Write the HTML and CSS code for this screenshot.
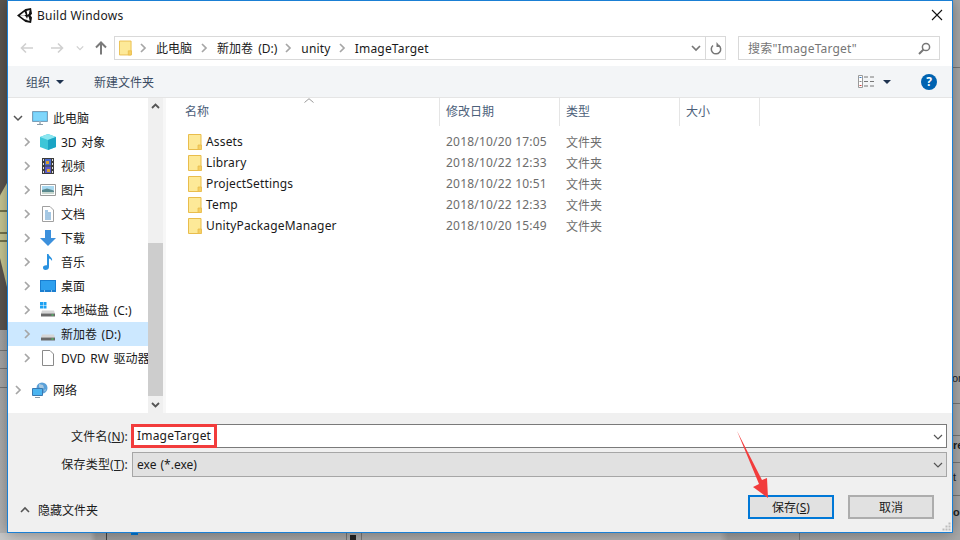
FILE: index.html
```html
<!DOCTYPE html>
<html lang="zh-CN">
<head>
  <meta charset="UTF-8">
  <title>Build Windows</title>
  <link rel="stylesheet" href="styles.css">
</head>
<body>
  <svg class="sprites" aria-hidden="true">
    <symbol id="folder" viewBox="0 0 14 16">
      <path d="M.5.5h12.5v15H.5z" fill="#fde998" stroke="#e9bd4c"/>
      <path d="M10 11h3.500v4.500H10z" fill="#f6cf62" stroke="#e9bd4c" stroke-width=".8"/>
    </symbol>
    <symbol id="chev-right" viewBox="0 0 10 10">
      <path d="M3 1l4 4-4 4" fill="none" stroke="#a6a6a6" stroke-width="1.700"/>
    </symbol>
    <symbol id="chev-down" viewBox="0 0 10 10">
      <path d="M1 3l4 4 4-4" fill="none" stroke="#555" stroke-width="1.500"/>
    </symbol>
    <symbol id="drive" viewBox="0 0 16 16">
      <path d="M2 8.500h12l1 3H1z" fill="#d6d6d6"/>
      <path d="M1 11h14v3.500H1z" fill="#6a6a6a"/>
      <path d="M1 11h14v1H1z" fill="#a8a8a8"/>
      <path d="M11.500 12.500h2v1h-2z" fill="#44e060"/>
    </symbol>
  </svg>

  <div class="desktop">
    <div class="strip-left"></div>
    <div class="strip-leaf"></div>
    <div class="strip-right"></div>
    <div class="strip-bottom"></div>
    <div class="peek peek-or">or</div>
    <div class="peek peek-re">re</div>
    <div class="peek peek-t">t</div>
    <div class="peek peek-ou">ou</div>

    <div class="dialog">
      <div class="titlebar">
        <svg class="logo" width="15" height="15" viewBox="0 0 16 16">
          <path d="M0 8L9 1l6-1 1 6-1.600 2L16 10l-1 6-6-1z" fill="#111"/>
          <path d="M3 8l5-4 1.500 3.300L8 8zM10.200 3.200l3.300-1-.8 4-1.500 1.300zM3 8.200h5l1.500.8 1.700 3.500-.2.300-3-.8zM11.700 8.600l1 1.400.8 3.800-3.300-1z" fill="#fff"/>
        </svg>
        <span class="title">Build Windows</span>
        <svg class="close" width="12" height="12" viewBox="0 0 12 12">
          <path d="M1 1l10 10M11 1L1 11" stroke="#111" stroke-width="1.100"/>
        </svg>
      </div>

      <div class="addressrow">
        <div class="navbtns">
          <svg width="14" height="12" viewBox="0 0 14 12"><path d="M13 6H2M6 1.500L1.500 6 6 10.500" fill="none" stroke="#d0d0d0" stroke-width="1.600"/></svg>
          <svg class="nav-fwd" width="14" height="12" viewBox="0 0 14 12"><path d="M1 6h11M8 1.500L12.500 6 8 10.500" fill="none" stroke="#d0d0d0" stroke-width="1.600"/></svg>
          <svg class="nav-drop" width="8" height="8" viewBox="0 0 10 10"><path d="M1 3l4 4 4-4" fill="none" stroke="#d0d0d0" stroke-width="1.600"/></svg>
          <svg class="nav-up" width="12" height="14" viewBox="0 0 12 14"><path d="M6 13.500V2M1 6.500L6 1.500l5 5" fill="none" stroke="#7a7a7a" stroke-width="2"/></svg>
        </div>
        <div class="pathbox">
          <svg class="pathfolder" width="13" height="16"><use href="#folder"/></svg>
          <svg class="sep" width="10" height="10"><use href="#chev-right"/></svg>
          <span class="crumb crumb-first">此电脑</span>
          <svg class="sep" width="10" height="10"><use href="#chev-right"/></svg>
          <span class="crumb crumb-drive">新加卷 (D:)</span>
          <svg class="sep" width="10" height="10"><use href="#chev-right"/></svg>
          <span class="crumb latin">unity</span>
          <svg class="sep" width="10" height="10"><use href="#chev-right"/></svg>
          <span class="crumb latin">ImageTarget</span>
          <svg class="pathdrop" width="10" height="10" viewBox="0 0 10 10"><path d="M1 3l4 4 4-4" fill="none" stroke="#777" stroke-width="1.700"/></svg>
          <div class="refresh">
            <svg width="12" height="13" viewBox="0 0 12 13"><path d="M8.700 3.300A4.700 4.700 0 1 1 3 3.500" fill="none" stroke="#777" stroke-width="1.500"/><path d="M6.500 0v5h4z" fill="#777"/></svg>
          </div>
        </div>
        <div class="searchbox">
          <span class="latin">搜索"ImageTarget"</span>
          <svg width="13" height="13" viewBox="0 0 13 13"><circle cx="8" cy="5" r="3.600" fill="none" stroke="#777" stroke-width="1.500"/><path d="M5.500 7.500L1 12" stroke="#777" stroke-width="2"/></svg>
        </div>
      </div>

      <div class="toolbar">
        <span class="tool">组织</span>
        <span class="caret"></span>
        <span class="tool tool-new">新建文件夹</span>
        <svg class="viewicon" width="17" height="13" viewBox="0 0 17 13">
          <path d="M.5.500h4v12h-4z" fill="#fff" stroke="#9a9a9a"/>
          <path d="M1.500 2h2v1h-2z" fill="#3d7cc4"/>
          <path d="M1.500 6h2v1h-2z" fill="#888"/>
          <path d="M1.500 10h2v1h-2z" fill="#d04040"/>
          <path d="M6 2h4M12 2h4M6 6.500h4M12 6.500h4M6 11h4M12 11h4" stroke="#777"/>
        </svg>
        <span class="caret caret-view"></span>
        <span class="help">?</span>
      </div>

      <div class="content">
        <div class="navpane">
          <div class="navrow navrow-top">
            <svg class="chev" width="10" height="10"><use href="#chev-down"/></svg>
            <svg width="16" height="16" viewBox="0 0 16 16"><path d="M.5 1.500h15v10H.5z" fill="#62c6f5" stroke="#7c9fb8"/><path d="M1.500 2.500h13v8h-13z" fill="#7fd6fb"/><path d="M5 14h6v1H5z" fill="#8a9aa6"/><path d="M7 11.500h2V14H7z" fill="#b4c0c8"/></svg>
            <span>此电脑</span>
          </div>
          <div class="navrow">
            <svg class="chev" width="10" height="10"><use href="#chev-right"/></svg>
            <svg width="16" height="16" viewBox="0 0 16 16"><path d="M8 0l8 3v10l-8 3-8-3V3z" fill="#3cc6d8"/><path d="M8 6L0 3l8-3 8 3z" fill="#8be6f0"/><path d="M8 6v10l8-3V3z" fill="#1aa4c4"/></svg>
            <span>3D 对象</span>
          </div>
          <div class="navrow">
            <svg class="chev" width="10" height="10"><use href="#chev-right"/></svg>
            <svg width="16" height="16" viewBox="0 0 16 16"><path d="M2 0h12v16H2z" fill="#3c3c3c"/><path d="M5 1h6v6.500H5z" fill="#4a6ad0"/><path d="M5 8.500h6V15H5z" fill="#5a5ac8"/><path d="M6 3h3v3H6zM7 11h3v3H7z" fill="#d8a030"/><path d="M3 1h1v2H3zM3 5h1v2H3zM3 9h1v2H3zM3 13h1v2H3zM12 1h1v2h-1zM12 5h1v2h-1zM12 9h1v2h-1zM12 13h1v2h-1z" fill="#ddd"/></svg>
            <span>视频</span>
          </div>
          <div class="navrow">
            <svg class="chev" width="10" height="10"><use href="#chev-right"/></svg>
            <svg width="16" height="14" viewBox="0 0 16 14"><path d="M.5 1.500h15v11H.5z" fill="#fff" stroke="#9a9a9a"/><path d="M2 3h12v4H2z" fill="#a8d8f0"/><path d="M2 7l5-1.500L14 7.500V11H2z" fill="#5a8a90"/><path d="M2 9h12v2H2z" fill="#c8d8d0"/></svg>
            <span>图片</span>
          </div>
          <div class="navrow">
            <svg class="chev" width="10" height="10"><use href="#chev-right"/></svg>
            <svg width="16" height="16" viewBox="0 0 16 16"><path d="M2.500.5H10l3.500 3.500v11.500h-11z" fill="#fff" stroke="#a0a0a0"/><path d="M5 5h3M5 7h6M5 9h6M5 11h6M5 13h6" stroke="#4a90c8"/></svg>
            <span>文档</span>
          </div>
          <div class="navrow">
            <svg class="chev" width="10" height="10"><use href="#chev-right"/></svg>
            <svg width="16" height="16" viewBox="0 0 16 16"><path d="M5 0h6v8h5l-8 8-8-8h5z" fill="#3c90dc"/></svg>
            <span>下载</span>
          </div>
          <div class="navrow">
            <svg class="chev" width="10" height="10"><use href="#chev-right"/></svg>
            <svg width="16" height="16" viewBox="0 0 16 16"><path d="M7 0h1.500c.5 3 4.500 3.500 3.500 7-.7-1.500-2-2.300-3-2.500V13c0 2-1.500 3-3.500 3S3 15 3 13.500 4.500 11 7 11.300z" fill="#2a92e0"/></svg>
            <span>音乐</span>
          </div>
          <div class="navrow">
            <svg class="chev" width="10" height="10"><use href="#chev-right"/></svg>
            <svg width="16" height="12" viewBox="0 0 16 12"><path d="M0 0h16v12H0z" fill="#1a7ed0"/><path d="M1 1h14v9H1z" fill="#2ea0ee"/><path d="M4 10.500h1v1H4zM11 10.500h1v1h-1z" fill="#fff"/></svg>
            <span>桌面</span>
          </div>
          <div class="navrow">
            <svg class="chev" width="10" height="10"><use href="#chev-right"/></svg>
            <svg width="16" height="16" viewBox="0 0 16 16"><use href="#drive"/><path d="M0 0h3v3H0zM3.500 0h3v3h-3zM0 3.500h3v3H0zM3.500 3.500h3v3h-3z" fill="#1da1f2"/></svg>
            <span>本地磁盘 (C:)</span>
          </div>
          <div class="navrow navrow-selected">
            <svg class="chev" width="10" height="10"><use href="#chev-right"/></svg>
            <svg width="16" height="16" viewBox="0 0 16 16"><use href="#drive"/></svg>
            <span>新加卷 (D:)</span>
          </div>
          <div class="navrow">
            <svg class="chev" width="10" height="10"><use href="#chev-right"/></svg>
            <svg width="16" height="16" viewBox="0 0 16 16"><path d="M2.500.5H10l3.500 3.500v11.500h-11z" fill="#fff" stroke="#8a8a8a"/></svg>
            <span>DVD RW 驱动器 (E:)</span>
          </div>
          <div class="navrow navrow-top navrow-net">
            <svg class="chev" width="10" height="10"><use href="#chev-right"/></svg>
            <svg width="16" height="16" viewBox="0 0 16 16"><circle cx="10" cy="6" r="5.500" fill="#5aa0d8"/><path d="M7 2l4 1 1 3-3 1-2-2zM12 8l2-1-1 3z" fill="#a8c8e0"/><path d="M.5 6.500h10v7H.5z" fill="#4ab4f0" stroke="#3a78b0"/><path d="M3 15h5v1H3z" fill="#8a9aa6"/></svg>
            <span>网络</span>
          </div>
        </div>

        <div class="scrollbar">
          <svg class="scrollbtn" width="15" height="17" viewBox="0 0 15 17"><path d="M4 10l3.500-3.500L11 10" fill="none" stroke="#555" stroke-width="1.800"/></svg>
          <div class="scrolltrack"><div class="scrollthumb"></div></div>
          <svg class="scrollbtn" width="15" height="17" viewBox="0 0 15 17"><path d="M4 7l3.500 3.500L11 7" fill="none" stroke="#555" stroke-width="1.800"/></svg>
        </div>

        <div class="filelist">
          <svg class="sortmark" width="10" height="5" viewBox="0 0 10 5"><path d="M.5 4.500L5 .7l4.500 3.800" fill="none" stroke="#999"/></svg>
          <div class="row row-head">
            <div class="cell cell-name">名称</div>
            <div class="cell">修改日期</div>
            <div class="cell">类型</div>
            <div class="cell">大小</div>
          </div>
          <div class="rows">
            <div class="row">
              <div class="fname"><svg width="14" height="16"><use href="#folder"/></svg>Assets</div>
              <div class="fmeta latin">2018/10/20 17:05</div>
              <div class="fmeta">文件夹</div>
            </div>
            <div class="row">
              <div class="fname"><svg width="14" height="16"><use href="#folder"/></svg>Library</div>
              <div class="fmeta latin">2018/10/22 12:33</div>
              <div class="fmeta">文件夹</div>
            </div>
            <div class="row">
              <div class="fname"><svg width="14" height="16"><use href="#folder"/></svg>ProjectSettings</div>
              <div class="fmeta latin">2018/10/22 10:51</div>
              <div class="fmeta">文件夹</div>
            </div>
            <div class="row">
              <div class="fname"><svg width="14" height="16"><use href="#folder"/></svg>Temp</div>
              <div class="fmeta latin">2018/10/22 12:33</div>
              <div class="fmeta">文件夹</div>
            </div>
            <div class="row">
              <div class="fname"><svg width="14" height="16"><use href="#folder"/></svg>UnityPackageManager</div>
              <div class="fmeta latin">2018/10/20 15:49</div>
              <div class="fmeta">文件夹</div>
            </div>
          </div>
        </div>
      </div>

      <div class="bottom">
        <div class="fields">
          <label class="fieldlabel">文件名(<u>N</u>):</label>
          <div class="field field-input">
            <span class="redbox latin">ImageTarget</span>
            <svg class="fielddrop" width="10" height="10" viewBox="0 0 10 10"><path d="M1 3l4 4 4-4" fill="none" stroke="#555" stroke-width="1.200"/></svg>
          </div>
          <label class="fieldlabel">保存类型(<u>T</u>):</label>
          <div class="field field-select">
            <span>exe (*.exe)</span>
            <svg class="fielddrop" width="10" height="10" viewBox="0 0 10 10"><path d="M1 3l4 4 4-4" fill="none" stroke="#555" stroke-width="1.200"/></svg>
          </div>
        </div>
        <div class="actions">
          <div class="hidefolders">
            <svg width="10" height="10" viewBox="0 0 10 10"><path d="M1 7l4-4 4 4" fill="none" stroke="#555" stroke-width="1.600"/></svg>
            <span>隐藏文件夹</span>
          </div>
          <button class="btn btn-primary">保存(<u>S</u>)</button>
          <button class="btn">取消</button>
        </div>
        <svg class="grip" width="9" height="9" viewBox="0 0 9 9"><path d="M6.500.5h2v2h-2zM3.500 3.500h2v2h-2zM6.500 3.500h2v2h-2zM.5 6.500h2v2h-2zM3.500 6.500h2v2h-2zM6.500 6.500h2v2h-2z" fill="#bdbdbd"/></svg>
      </div>

      <svg class="arrow" width="34" height="72" viewBox="0 0 34 72">
        <path d="M2 2L27 51l5-2 1 20-15-11 6-3z" fill="#f23c3c"/>
      </svg>
    </div>
  </div>
</body>
</html>
```

FILE: styles.css
```css
* {
  box-sizing: border-box;
}
html, body {
  margin: 0;
  padding: 0;
  height: 100%;
}
body {
  font-family: "Noto Sans", "Noto Sans CJK SC", sans-serif;
  font-size: 12px;
  color: #1a1a1a;
  overflow: hidden;
}
.sprites {
  width: 0;
  height: 0;
  display: block;
}
u {
  text-underline-offset: 1px;
}
.latin {
  letter-spacing: 0.2px;
}

/* what shows behind the dialog */
.desktop {
  position: relative;
  width: 960px;
  height: 540px;
  overflow: hidden;
  padding-left: 7px;
  background: #a9a9a9;
}
.strip-left {
  position: absolute;
  left: 0;
  top: 0;
  width: 7px;
  height: 540px;
  background:
    linear-gradient(#777, #777) 0 350px / 7px 1px no-repeat,
    linear-gradient(#777, #777) 0 368px / 7px 1px no-repeat,
    linear-gradient(#777, #777) 0 387px / 7px 1px no-repeat,
    linear-gradient(#5c5650, #5c5650) 0 0 / 7px 330px no-repeat,
    linear-gradient(#8c8c8c, #b4b4b4);
}
.strip-leaf {
  position: absolute;
  left: 0;
  top: 183px;
  width: 7px;
  height: 104px;
  background:
    linear-gradient(#77764f, #77764f) 0 27px / 7px 2px no-repeat,
    linear-gradient(#77764f, #77764f) 0 49px / 7px 2px no-repeat,
    linear-gradient(#77764f, #77764f) 0 57px / 7px 2px no-repeat,
    #c9c995;
  clip-path: polygon(100% 0, 100% 100%, 0 72%, 0 12%);
}
.strip-right {
  position: absolute;
  left: 953px;
  top: 0;
  width: 7px;
  height: 540px;
  background:
    linear-gradient(#777, #777) 0 67px / 7px 1px no-repeat,
    linear-gradient(#777, #777) 0 403px / 7px 1px no-repeat,
    linear-gradient(#777, #777) 0 435px / 7px 1px no-repeat,
    linear-gradient(#777, #777) 0 462px / 7px 1px no-repeat,
    linear-gradient(#777, #777) 0 495px / 7px 1px no-repeat;
}
.strip-bottom {
  position: absolute;
  left: 0;
  top: 533px;
  width: 960px;
  height: 7px;
  background:
    linear-gradient(#0078d7, #0078d7) 131px 0 / 7px 2px no-repeat,
    linear-gradient(#222, #222) 350px 2px / 6px 5px no-repeat,
    linear-gradient(#444, #444) 106px 0 / 1px 7px no-repeat,
    linear-gradient(#777, #777) 346px 0 / 1px 7px no-repeat,
    linear-gradient(#777, #777) 361px 0 / 1px 7px no-repeat,
    linear-gradient(#777, #777) 799px 0 / 1px 7px no-repeat,
    linear-gradient(90deg, #c8c8c8 0, #b8b8b8 90px, #9c9c9c 96px, #b4b4b4 720px, #9c9c9c 728px, #a8a8a8);
}
.peek {
  position: absolute;
  left: 953px;
  z-index: 1;
  font-family: "Liberation Sans", sans-serif;
  font-size: 11px;
  line-height: 12px;
  color: #222;
}
.peek-or { top: 372px; left: 952px; }
.peek-re { top: 439px; font-weight: bold; }
.peek-t { top: 471px; }
.peek-ou { top: 506px; font-weight: bold; }

.dialog {
  position: relative;
  width: 946px;
  height: 533px;
  background: #fff;
  border: 1px solid #1a7fd4;
  box-shadow: 0 0 14px rgba(0, 0, 0, 0.35);
  display: flex;
  flex-direction: column;
  z-index: 2;
}

.titlebar {
  height: 30px;
  display: flex;
  align-items: center;
  padding: 0 9px 2px;
}
.logo {
  margin-right: 5px;
}
.title {
  flex: 1;
  letter-spacing: 0.25px;
}

.addressrow {
  height: 35px;
  display: flex;
  align-items: flex-start;
  padding-top: 5px;
}
.navbtns {
  width: 106px;
  height: 24px;
  padding-left: 12px;
  display: flex;
  align-items: center;
}
.nav-fwd { margin-left: 16px; }
.nav-drop { margin-left: 12px; }
.nav-up { margin-left: 11px; }
.pathbox {
  width: 612px;
  height: 24px;
  border: 1px solid #d9d9d9;
  display: flex;
  align-items: center;
  padding-left: 4px;
}
.pathfolder {
  margin-right: 6px;
}
.sep {
  margin-right: 8px;
}
.crumb {
  margin-right: 6px;
}
.crumb-first {
  margin-right: 7px;
}
.crumb-drive {
  word-spacing: 2px;
}
.pathdrop {
  margin-left: auto;
  margin-right: 4px;
}
.refresh {
  width: 20px;
  height: 22px;
  border-left: 1px solid #d9d9d9;
  display: flex;
  align-items: center;
  justify-content: center;
}
.searchbox {
  width: 202px;
  height: 24px;
  margin-left: 12px;
  border: 1px solid #d9d9d9;
  display: flex;
  align-items: center;
  justify-content: space-between;
  padding: 0 8px 0 9px;
  color: #767676;
}

.toolbar {
  height: 32px;
  background: #f3f5f7;
  border-bottom: 1px solid #e5e5e5;
  display: flex;
  align-items: center;
  padding-left: 18px;
  color: #3b4c63;
}
.caret {
  width: 0;
  height: 0;
  margin-left: 6px;
  border-left: 4px solid transparent;
  border-right: 4px solid transparent;
  border-top: 4px solid #1f3350;
}
.tool-new {
  margin-left: 30px;
}
.viewicon {
  margin-left: auto;
}
.caret-view {
  margin-left: 8px;
}
.help {
  width: 16px;
  height: 16px;
  margin: 0 15px 0 30px;
  border-radius: 50%;
  background: #0063b1;
  color: #fff;
  font-weight: bold;
  font-size: 12px;
  line-height: 16px;
  text-align: center;
}

.content {
  height: 315px;
  display: flex;
}
.navpane {
  width: 140px;
  padding-top: 8px;
  overflow: hidden;
}
.navrow {
  height: 24px;
  display: flex;
  align-items: center;
  padding-left: 14px;
  white-space: nowrap;
}
.navrow svg {
  flex: none;
  width: 16px;
}
.navrow .chev {
  width: 10px;
  margin-right: 8px;
}
.navrow span {
  margin-left: 5px;
  word-spacing: 1.5px;
}
.navrow-top {
  padding-left: 5px;
}
.navrow-top .chev {
  margin-right: 9px;
}
.navrow-selected {
  background: #cce8ff;
}
.navrow-net {
  margin-top: 8px;
}

.scrollbar {
  width: 15px;
  background: #f0f0f0;
  display: flex;
  flex-direction: column;
}
.scrollbtn {
  flex: none;
}
.scrolltrack {
  flex: 1;
  padding-top: 128px;
}
.scrollthumb {
  height: 153px;
  background: #cdcdcd;
}

.filelist {
  position: relative;
  flex: 1;
  border-left: 3px solid #f7f7f7;
}
.sortmark {
  position: absolute;
  left: 138px;
  top: 0;
}
.row {
  display: grid;
  grid-template-columns: 274px 120px 120px 80px;
}
.row-head {
  height: 27px;
  color: #4c607a;
}
.cell {
  border-right: 1px solid #e5e5e5;
  padding-left: 6px;
  line-height: 28px;
}
.cell-name {
  padding-left: 19px;
}
.rows {
  padding-top: 6px;
}
.rows .row {
  height: 21px;
  align-items: center;
}
.fname {
  display: flex;
  align-items: center;
  padding-left: 22px;
  letter-spacing: 0.16px;
}
.fname svg {
  margin-right: 4px;
}
.fmeta {
  padding-left: 6px;
  color: #6d6d6d;
}

.bottom {
  position: relative;
  flex: 1;
  background: #f0f0f0;
  padding: 11px 5px 0 0;
}
.fields {
  display: grid;
  grid-template-columns: 120px 815px;
  column-gap: 4px;
  row-gap: 3px;
}
.fieldlabel {
  text-align: right;
  line-height: 25px;
  letter-spacing: 0.2px;
  color: #222;
}
.field {
  position: relative;
  display: flex;
  align-items: center;
  height: 24px;
  border: 1px solid #7a7a7a;
  background: #fff;
}
.field-select {
  height: 25px;
  border-color: #a6a6a6;
  background: #e1e1e1;
  padding-left: 4px;
  word-spacing: 1px;
}
.redbox {
  height: 24px;
  margin: -1px 0 0 -2px;
  width: 86px;
  padding-left: 3px;
  line-height: 18px;
  border: 3px solid #f23c3c;
  white-space: nowrap;
}
.fielddrop {
  position: absolute;
  right: 3px;
  top: 7px;
}
.actions {
  display: flex;
  align-items: center;
  margin-top: 18px;
  padding-left: 12px;
}
.hidefolders {
  display: flex;
  align-items: center;
  gap: 8px;
  margin-right: auto;
  margin-top: 5px;
}
.btn {
  width: 86px;
  height: 24px;
  margin-right: 13px;
  padding: 0;
  font: inherit;
  color: #1a1a1a;
  background: #e1e1e1;
  border: 2px solid #adadad;
}
.btn-primary {
  margin-right: 14px;
  border-color: #0078d7;
}
.grip {
  position: absolute;
  right: 1px;
  bottom: 1px;
}

/* red annotation drawn over the shot */
.arrow {
  position: absolute;
  left: 727px;
  top: 428px;
}
```
